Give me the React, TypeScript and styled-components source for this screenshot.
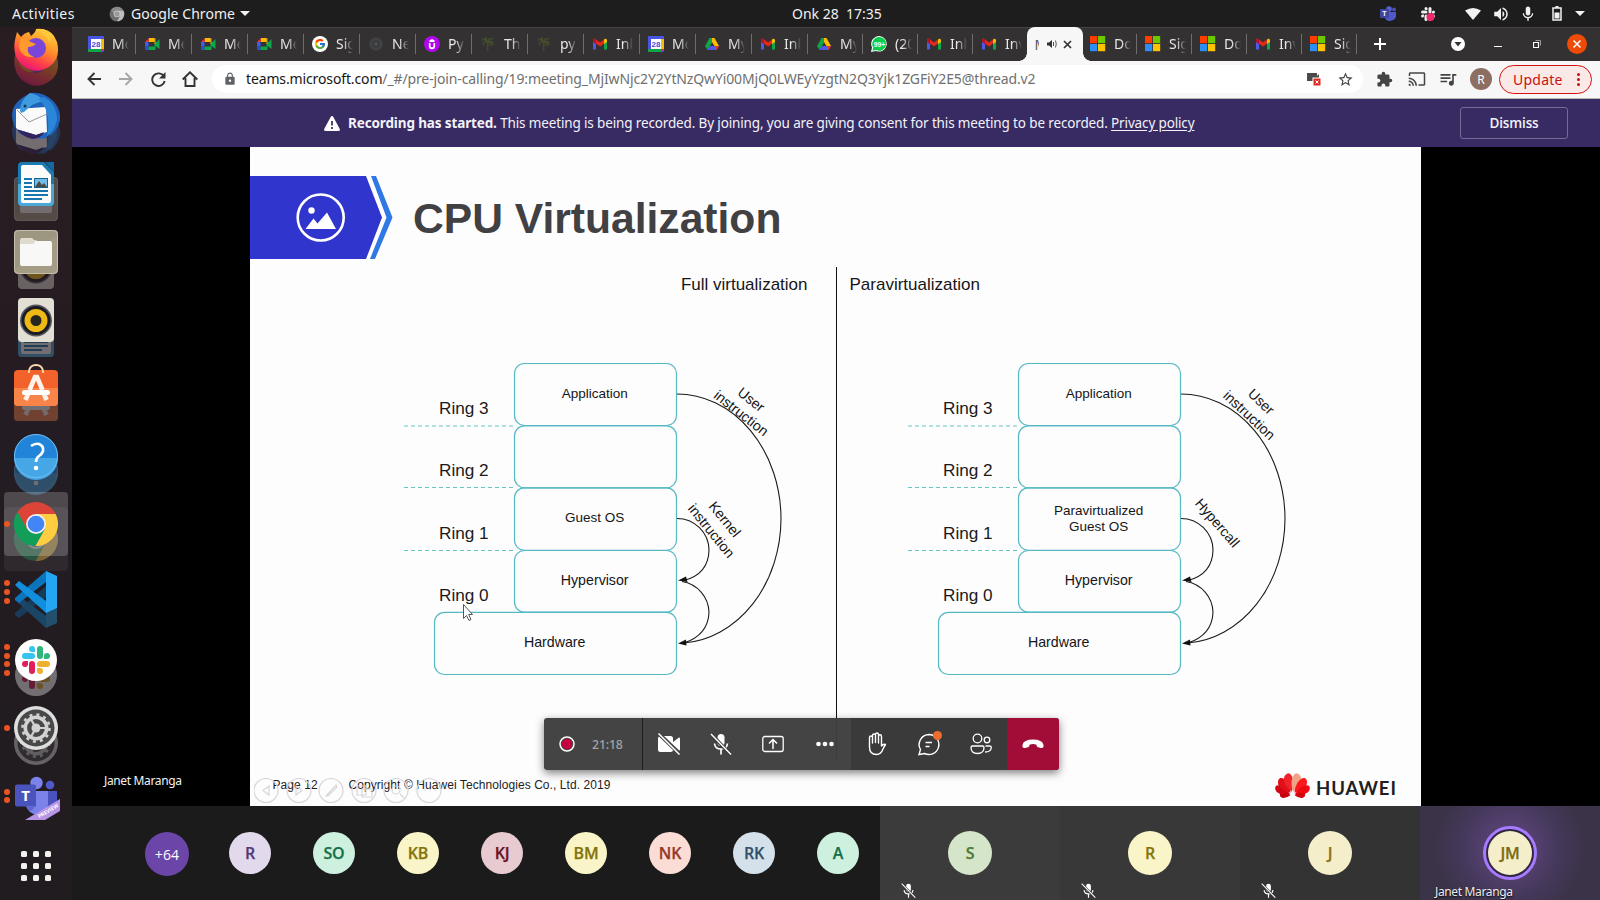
import React from 'react';
import styled, { createGlobalStyle, css } from 'styled-components';
import { FcGoogle } from 'react-icons/fc';
import { MdLock, MdStarBorder, MdExtension, MdCast, MdQueueMusic, MdVolumeUp, MdMic } from 'react-icons/md';

const UI = '"Noto Sans", "Open Sans", sans-serif';
const ARIAL = '"Liberation Sans", Arial, sans-serif';

const Global = createGlobalStyle`
  * { box-sizing: border-box; }
  html, body { margin: 0; padding: 0; background: #000; }
  body { width: 1600px; height: 900px; overflow: hidden; font-family: ${UI}; }
  svg { display: block; flex: none; }
`;

const Screen = styled.div`
  width: 1600px;
  height: 900px;
  display: flex;
  flex-direction: column;
  overflow: hidden;
`;

/* ---------- system bar ---------- */

const SystemBar = styled.header`
  height: 27px;
  flex: none;
  display: grid;
  grid-template-columns: 792px 1fr 222px;
  align-items: center;
  background: #1d1d1d;
  color: #f0f0f0;
  font-size: 14px;
  line-height: 26px;
`;

const SystemLeft = styled.div`
  display: flex;
  align-items: center;
  padding-left: 12px;
  white-space: pre;
`;

const Activities = styled.span`
  width: 97px;
  letter-spacing: 0.45px;
`;

const AppName = styled.span`
  margin: 0 6px 0 6px;
  width: 103px;
  letter-spacing: 0.05px;
`;

const Clock = styled.div`
  white-space: pre;
`;

const Tray = styled.div`
  display: flex;
  align-items: center;
`;

const TrayItem = styled.span<{ $w: number }>`
  width: ${(p) => p.$w}px;
  display: flex;
  justify-content: center;
`;

const Desktop = styled.div`
  flex: 1;
  min-height: 0;
  display: flex;
`;

/* ---------- dock ---------- */

const DockBar = styled.nav`
  width: 72px;
  flex: none;
  display: flex;
  flex-direction: column;
  overflow: hidden;
  background: linear-gradient(#2a1d22, #231c22 50%, #211c20);
`;

const DockCell = styled.div<{ $h: number }>`
  position: relative;
  height: ${(p) => p.$h}px;
  flex: none;
  display: flex;
  justify-content: center;
  align-items: flex-end;
  padding-bottom: 10px;
`;

const Ghost = styled.div`
  position: absolute;
  left: 12px;
  bottom: -5px;
  opacity: 0.36;
`;

const Front = styled.div`
  position: relative;
`;

const Focus = styled.div<{ $faint?: boolean }>`
  position: absolute;
  left: 4px;
  top: ${(p) => (p.$faint ? 17 : 2)}px;
  width: 64px;
  height: 64px;
  border-radius: 4px;
  background: rgba(255, 255, 255, ${(p) => (p.$faint ? 0.06 : 0.2)});
`;

const Running = styled.div`
  position: absolute;
  left: 4px;
  top: 0;
  height: 68px;
  display: flex;
  flex-direction: column;
  justify-content: center;
  gap: 2.7px;
`;

const Pip = styled.i`
  width: 6px;
  height: 6px;
  border-radius: 50%;
  background: #e95420;
`;

const AppsGrid = styled.div`
  width: 30px;
  margin: 21px auto 0;
  display: grid;
  grid-template-columns: repeat(3, 6px);
  gap: 6px;
`;

const AppsDot = styled.i`
  width: 6px;
  height: 6px;
  border-radius: 1.5px;
  background: #f2f2ee;
`;

const Firefox = () => (
  <svg width="48" height="48" viewBox="0 0 48 48">
    <defs>
      <linearGradient id="ff" x1=".8" y1="0" x2=".3" y2="1">
        <stop offset="0" stopColor="#ffd83a" />
        <stop offset=".45" stopColor="#ff8a2a" />
        <stop offset=".75" stopColor="#ff3c4e" />
        <stop offset="1" stopColor="#e5107e" />
      </linearGradient>
    </defs>
    <path d="M5 8 9 13Q12 9 17 8L19 12Q24 8 24 5Q37 4 42 12L45 18Q49 34 38 42Q24 52 10 41Q0 32 3 16Z" fill="url(#ff)" />
    <circle cx="24" cy="24" r="10" fill="#7a45d8" />
    <path d="M9 14Q15 15 19 18L24 20Q21 23 16 23Q14 30 22 33Q9 34 7 22Z" fill="#ff9a2c" />
    <path d="M24 5Q35 9 38 20Q39 12 36 7Q31 4 24 5Z" fill="#ffc93c" />
  </svg>
);

const Thunderbird = () => (
  <svg width="48" height="48" viewBox="0 0 48 48">
    <path d="M18 1Q30-1 40 8Q49 16 48 28Q46 38 38 44L38 40L34 46Q20 48 8 42Q0 34 0 22Q1 12 10 6Z" fill="#1f63bd" />
    <path d="M4 17 34 15 35 40 24 43 4 37Z" fill="#fafafa" />
    <path d="M5 18 17 30 35 22" fill="none" stroke="#999" />
    <path d="M18 1Q25 2 33 9Q26 10 20 13L12 20Q8 22 8 19Q8 8 18 1Z" fill="#3f9ade" />
    <path d="M32 5Q45 12 45 28Q42 40 35 44Q38 30 34 18Q31 10 26 7Z" fill="#2c86d8" />
    <path d="M4 37 24 43 32 40Q30 46 20 47 8 44 3 34Z" fill="#33245c" />
    <circle cx="13" cy="14" r="1.5" fill="#16365c" />
  </svg>
);

const Writer = () => (
  <svg width="48" height="48" viewBox="0 0 48 48">
    <path d="M10 2H32L42 12V42Q42 46 38 46H10Q6 46 6 42V6Q6 2 10 2Z" fill="#1b7bb0" />
    <path d="M6 24H42V42Q42 46 38 46H10Q6 46 6 42Z" fill="#4aa9d8" />
    <path d="M11 5H30L39 15V41Q39 43 37 43H11Q9 43 9 41V7Q9 5 11 5Z" fill="#fbfbfb" />
    <path d="M33 2H42V12Z" fill="#126ba0" />
    <path d="M12 19H20M12 23H20M12 27H20M12 31H36M12 35H36M12 39H30" stroke="#1677ad" strokeWidth="2" />
    <rect x="22.500" y="18.500" width="13" height="9" fill="#74bce8" stroke="#15628f" />
    <path d="M23 27 27 21 30 25 32 23 35 27Z" fill="#4a4a4a" />
  </svg>
);

const Files = () => (
  <svg width="48" height="48" viewBox="0 0 48 48">
    <rect x="2" y="2" width="44" height="44" rx="4" fill="#a59c86" />
    <path d="M2 42V6Q2 2 6 2H42Q46 2 46 6L2 42Z" fill="#968f7b" opacity=".5" />
    <rect x="2.500" y="2.500" width="43" height="43" rx="4" fill="none" stroke="#c6bfae" />
    <path d="M8 18V12Q8 10 10 10H20L24 14H38V20Z" fill="#e0ddd0" />
    <rect x="8" y="13" width="32" height="25" rx="2" fill="#f8f8f7" />
    <path d="M8 16H21L25 12H12Q8 12 8 16Z" fill="#dedbce" />
  </svg>
);

const Rhythm = () => (
  <svg width="48" height="48" viewBox="0 0 48 48">
    <rect x="6" y="2" width="36" height="44" rx="4" fill="#e2dfd4" />
    <circle cx="24" cy="24.500" r="16" fill="#5a5a60" />
    <circle cx="24" cy="24.500" r="14.500" fill="#1c1c24" />
    <circle cx="24" cy="24.500" r="11.500" fill="#edb914" />
    <circle cx="24" cy="24.500" r="5.500" fill="#26251f" />
  </svg>
);

const Software = () => (
  <svg width="48" height="48" viewBox="0 0 48 48">
    <rect x="2" y="6" width="44" height="36" rx="4" fill="#f4622c" />
    <path d="M2 24H46V38Q46 42 42 42H6Q2 42 2 38Z" fill="#f98449" />
    <path d="M17 9V7Q18 1 24 1T31 7V9" fill="none" stroke="#f8d9b0" strokeWidth="1.800" />
    <path d="M17.500 26 23 13H25L30.500 26M16 30 13.500 36M32 30 34.500 36" fill="none" stroke="#fff3ec" strokeWidth="4.600" />
    <rect x="10" y="26" width="28" height="5" rx="2.500" fill="#fff" />
  </svg>
);

const Help = () => (
  <svg width="48" height="48" viewBox="0 0 48 48">
    <circle cx="24" cy="24" r="22" fill="#2184d8" />
    <path d="M2 26H46A22 22 0 0 1 2 26Z" fill="#46a7e6" />
    <circle cx="24" cy="24" r="21.500" fill="none" stroke="#6fbdf0" />
    <path d="M19 14Q23 11 27 12Q32 14 31 19Q30 22 27 24Q24 26 24 30" fill="none" stroke="#fff" strokeWidth="2.700" />
    <circle cx="24" cy="36" r="2.300" fill="#fff" />
  </svg>
);

const ChromeLogo = ({ size = 48, grey }: { size?: number; grey?: boolean }) => {
  const [r, y, g, b] = grey ? ['#8a8a8a', '#bcbcbc', '#6e6e6e', '#9a9a9a'] : ['#dc4437', '#ffcd42', '#129d58', '#4285f4'];
  return (
    <svg width={size} height={size} viewBox="0 0 48 48">
      <path d="M24 24 4.950 13A22 22 0 0 1 43.600 14Z" fill={r} />
      <path d="M24 14 5.500 12 14.500 29Z" fill={r} />
      <path d="M5.500 12 15 29 24 34 33 29 23.500 46A22 22 0 0 1 5.500 12Z" fill={g} />
      <path d="M24 14H43.600A22 22 0 0 1 23.500 46L33 29Z" fill={y} />
      <circle cx="24" cy="24" r="10" fill={grey ? '#ddd' : '#f2f2f2'} />
      <circle cx="24" cy="24" r="8.300" fill={b} />
    </svg>
  );
};

const VsCode = () => (
  <svg width="48" height="48" viewBox="0 0 48 48">
    <path d="M34 3 3 30V32L7 35 34 14Z" fill="#0a74bd" />
    <path d="M3 17 7 13 34 33V45Z" fill="#118fdd" />
    <path d="M34 3 45 8V40L34 45Z" fill="#25a6f2" />
  </svg>
);

const SlackMark = ({ mono }: { mono?: boolean }) => {
  const c = mono ? ['#eee', '#eee', '#eee', '#eee'] : ['#36c5f0', '#2eb67d', '#ecb22e', '#e01e5a'];
  return (
    <>
      <path d="M23 16H20A3 3 0 1 1 23 13Z" fill={c[0]} />
      <rect x="10" y="17" width="13" height="6" rx="3" fill={c[0]} />
      <rect x="25" y="10" width="6" height="13" rx="3" fill={c[1]} />
      <path d="M32 23V20A3 3 0 1 1 35 23Z" fill={c[1]} />
      <rect x="25" y="25" width="13" height="6" rx="3" fill={c[2]} />
      <path d="M25 32H28A3 3 0 1 1 25 35Z" fill={c[2]} />
      <rect x="17" y="25" width="6" height="13" rx="3" fill={c[3]} />
      <path d="M16 25V28A3 3 0 1 1 13 25Z" fill={c[3]} />
    </>
  );
};

const Slack = () => (
  <svg width="48" height="48" viewBox="0 0 48 48">
    <circle cx="24" cy="24" r="21" fill="#fff" />
    <SlackMark />
  </svg>
);

const Settings = () => (
  <svg width="48" height="48" viewBox="0 0 48 48">
    <circle cx="24" cy="24" r="22" fill="#dedede" />
    <circle cx="24" cy="24" r="18.500" fill="#484848" />
    <circle cx="24" cy="24" r="13.500" fill="none" stroke="#d2d2d2" strokeWidth="2.600" strokeDasharray="3 4.070" />
    <circle cx="24" cy="24" r="10.700" fill="none" stroke="#d2d2d2" strokeWidth="3.600" />
    <circle cx="24" cy="24" r="4.500" fill="#d2d2d2" />
    <path d="M24 24H35M24 24 18.500 14.500M24 24 18.500 33.500" stroke="#d2d2d2" strokeWidth="2.200" />
  </svg>
);

const TLetter = styled.text`
  font-family: "Open Sans", sans-serif;
  font-weight: 700;
  fill: #fff;
  text-anchor: middle;
`;

const Teams = () => (
  <svg width="48" height="48" viewBox="0 0 48 48">
    <circle cx="38" cy="13" r="4.300" fill="#5059c9" />
    <path d="M30 19H45V34Q43 40 36 39L30 36Z" fill="#4a53bd" />
    <circle cx="24.500" cy="11" r="6.200" fill="#7b83eb" />
    <path d="M14 19H36V32Q35 43 25 43Q16 41 14 34Z" fill="#7b83eb" />
    <path d="M24 20V35H15L17 39Q25 39 24 20Z" fill="#4b53bc" opacity=".6" />
    <rect x="3" y="12.500" width="21" height="22" rx="2" fill="#4b53bc" />
    <TLetter x="13.500" y="29" fontSize="15">T</TLetter>
    <path d="M48 27V39L33 48H13Z" fill="#b794e6" />
    <TLetter x="0" y="0" fontSize="5.200" transform="translate(37 40.500) rotate(-31)">PREVIEW</TLetter>
  </svg>
);

type DockApp = { icon: React.FC; ghost?: React.FC; dots?: number; h?: number; focus?: boolean };
const dockApps: DockApp[] = [
  { icon: Firefox, ghost: Firefox, h: 55 },
  { icon: Thunderbird, ghost: Thunderbird },
  { icon: Writer, ghost: Files },
  { icon: Files, ghost: Rhythm },
  { icon: Rhythm, ghost: Writer },
  { icon: Software, ghost: Software },
  { icon: Help, ghost: Help },
  { icon: ChromeLogo, ghost: ChromeLogo, dots: 1, focus: true },
  { icon: VsCode, ghost: VsCode, dots: 3 },
  { icon: Slack, ghost: Slack, dots: 4 },
  { icon: Settings, ghost: Settings, dots: 1 },
  { icon: Teams, dots: 2 },
];

const Dock = () => (
  <DockBar>
    {dockApps.map(({ icon: Icon, ghost: G, dots = 0, h = 68, focus }, i) => (
      <DockCell key={i} $h={h}>
        {G && <Ghost><G /></Ghost>}
        {focus && <><Focus $faint /><Focus /></>}
        {dots > 0 && <Running>{Array.from({ length: dots }, (_, d) => <Pip key={d} />)}</Running>}
        <Front><Icon /></Front>
      </DockCell>
    ))}
    <AppsGrid>{Array.from({ length: 9 }, (_, d) => <AppsDot key={d} />)}</AppsGrid>
  </DockBar>
);

/* ---------- browser ---------- */

const Browser = styled.div`
  flex: 1;
  min-width: 0;
  display: flex;
  flex-direction: column;
`;

const TabStrip = styled.div`
  height: 34px;
  flex: none;
  display: flex;
  align-items: center;
  padding: 0 0 1px 8px;
  background: #333132;
  border-top: 1px solid #454344;
`;

const Tab = styled.div<{ $w: number; $last?: boolean }>`
  width: ${(p) => p.$w}px;
  height: 20px;
  flex: none;
  display: flex;
  align-items: center;
  padding-left: 8px;
  border-right: 1px solid ${(p) => (p.$last ? 'transparent' : '#6e6c6d')};
`;

const TabLabel = styled.span`
  margin-left: 8px;
  width: 17px;
  overflow: hidden;
  white-space: nowrap;
  font-size: 14px;
  line-height: 20px;
  color: #e8e8e8;
  -webkit-mask-image: linear-gradient(90deg, #000 45%, transparent 100%);
  mask-image: linear-gradient(90deg, #000 45%, transparent 100%);
`;

const ActiveTab = styled.div`
  position: relative;
  width: 56px;
  margin: -1px -1px 0 0;
  height: 34px;
  align-self: flex-start;
  flex: none;
  display: flex;
  align-items: center;
  padding-left: 8px;
  background: #f7f7f7;
  border-radius: 8px 8px 0 0;
  &::before, &::after {
    content: '';
    position: absolute;
    bottom: 0;
    width: 8px;
    height: 8px;
  }
  &::before { left: -8px; background: radial-gradient(circle at 0 0, transparent 7.5px, #f7f7f7 8px); }
  &::after { right: -8px; background: radial-gradient(circle at 100% 0, transparent 7.5px, #f7f7f7 8px); }
`;

const ActiveLetter = styled.span`
  width: 4px;
  overflow: hidden;
  font-size: 14px;
  color: #555;
  text-indent: -0.5px;
  margin-right: 8px;
`;

const WindowButtons = styled.div`
  margin-left: auto;
  margin-right: 3px;
  display: flex;
  align-items: center;
`;

const Slot = styled.span<{ $w: number }>`
  width: ${(p) => p.$w}px;
  flex: none;
  display: flex;
  align-items: center;
  justify-content: center;
`;

const Toolbar = styled.div`
  height: 38px;
  flex: none;
  display: flex;
  align-items: center;
  padding: 0 8px 1px 6px;
  background: #f7f7f7;
  border-bottom: 1px solid #b5b9b5;
`;

const Omnibox = styled.div`
  margin-left: 6px;
  width: 1151px;
  height: 28px;
  flex: none;
  display: flex;
  align-items: center;
  padding: 0 6px 0 11px;
  border-radius: 14px;
  background: #fff;
  color: #3c4043;
`;

const Url = styled.span`
  margin-left: 9px;
  padding-bottom: 1px;
  font-size: 14px;
  line-height: 25px;
  letter-spacing: -0.13px;
  color: #6f6f6f;
  white-space: nowrap;
  b { font-weight: 400; color: #151515; }
`;

const OmniRight = styled.div`
  margin-left: auto;
  display: flex;
  align-items: center;
`;

const Profile = styled.span`
  width: 22px;
  height: 22px;
  margin: 0 7px 0 2px;
  flex: none;
  display: flex;
  align-items: center;
  justify-content: center;
  border-radius: 50%;
  background: #8d6e63;
  color: #fff;
  font-size: 12px;
`;

const Update = styled.span`
  width: 93px;
  height: 29px;
  flex: none;
  display: flex;
  align-items: center;
  padding-left: 13px;
  border: 1px solid #d3120f;
  border-radius: 15px;
  background: #fbe9e8;
  color: #c5120f;
  font-size: 14px;
  letter-spacing: 0.25px;
`;

const Kebab = styled.span`
  margin-left: auto;
  margin-right: 11px;
  display: flex;
  flex-direction: column;
  gap: 2px;
  i { width: 3px; height: 3px; border-radius: 50%; background: #c5120f; }
`;

const Gmail = () => (
  <svg width="16" height="16" viewBox="0 0 16 16">
    <path d="M1 4.500V13.500H4V7Z" fill="#4f5be8" />
    <path d="M15 4.500V13.500H12V7Z" fill="#10a84b" />
    <path d="M1 4Q2 1.500 4 3.500L8 6.500 12 3.500V7.500L8 10.500 4 7.500Z" fill="#e8271c" />
    <path d="M1 4V6L4 8V3.500Q2 2 1 4Z" fill="#b3122a" />
    <path d="M15 4V6L12 8V3.500Q14 2 15 4Z" fill="#fbbc04" />
  </svg>
);

const TinyBold = styled.text`
  font-family: "Liberation Sans", sans-serif;
  font-weight: 700;
  text-anchor: middle;
`;

const Calendar = () => (
  <svg width="16" height="16" viewBox="0 0 16 16">
    <rect width="16" height="16" rx="1" fill="#4a55e6" />
    <path d="M13 3H16V13H13Z" fill="#fbbc04" />
    <path d="M0 13H13V16H1Q0 16 0 15Z" fill="#12a547" />
    <path d="M13 13H16L13 16Z" fill="#e53422" />
    <rect x="3" y="3" width="10" height="10" fill="#fff" />
    <TinyBold x="8" y="11" fontSize="8" fill="#3d50dd">28</TinyBold>
  </svg>
);

const Meet = () => (
  <svg width="16" height="16" viewBox="0 0 16 16">
    <path d="M1 6 5 2V6Z" fill="#e63528" />
    <path d="M5 2H10.500V6H5Z" fill="#fbbc04" />
    <path d="M1 6H4.500V10.500H1Z" fill="#3f5bf0" />
    <path d="M1 10.500H4.500V14H2Q1 14 1 13Z" fill="#2a50d8" />
    <path d="M4.500 10.500H10.500V8L15.500 3V13L11.500 10V14H4.500Z" fill="#0ea64a" />
    <path d="M10.500 2Q11.500 2 11.500 3V8H10.500Z" fill="#fbbc04" />
  </svg>
);

const Google = () => (
  <svg width="16" height="16" viewBox="0 0 16 16">
    <circle cx="8" cy="8" r="8" fill="#fff" />
    <g transform="translate(2 2)"><FcGoogle size={12} /></g>
  </svg>
);

const DimChrome = () => (
  <svg width="16" height="16" viewBox="0 0 16 16" fill="none" stroke="#45474b">
    <circle cx="8" cy="8" r="5" strokeWidth="3.500" opacity=".8" />
    <circle cx="8" cy="8" r="2.300" fill="#494d54" stroke="none" />
  </svg>
);

const Udemy = () => (
  <svg width="16" height="16" viewBox="0 0 16 16">
    <circle cx="8" cy="8" r="8" fill="#b108ee" />
    <path d="M5.700 7V10.500Q6 12.300 8 12.300T10.300 10.500V7M5.500 5.500 8 4 10.500 5.500" fill="none" stroke="#fff" strokeWidth="1.700" />
  </svg>
);

const Palm = () => (
  <svg width="16" height="16" viewBox="0 0 16 16" fill="none" stroke="#434d2b" strokeWidth="1.600">
    <path d="M8 6Q5 2 2 4M8 6Q4 5 3 9M8 6Q9 1 13 3M8 6Q13 4 13 9M8 6V9M8 6Q4 1 7 2M8 6Q11 5 11 10" />
    <path d="M8 6 7.500 15" stroke="#4e4330" />
  </svg>
);

const Drive = () => (
  <svg width="16" height="16" viewBox="0 0 16 16">
    <path d="M5.500 2H8L8 6.500 3.500 14 1 10Z" fill="#12a34a" />
    <path d="M8 2H10.500L15 10H10.500L8 6Z" fill="#fbbc04" />
    <path d="M3.500 14 5.700 10H15L12.500 14Z" fill="#4b5ce8" />
    <path d="M10.500 10H15L12.500 14Z" fill="#e5352a" />
  </svg>
);

const WhatsApp = () => (
  <svg width="16" height="16" viewBox="0 0 16 16">
    <path d="M8.500 0A7.800 7.800 0 1 1 5 15L0 16 1 11.500A8 8 0 0 1 8.500 0Z" fill="#fff" />
    <path d="M8.500 1A6.900 6.900 0 1 1 5 14L1.500 14.700 2.200 11.500A7 7 0 0 1 8.500 1Z" fill="#06cf4c" />
    <TinyBold x="8.500" y="10.500" fontSize="6.800" fill="#fff">99+</TinyBold>
  </svg>
);

const Microsoft = () => (
  <svg width="16" height="16" viewBox="0 0 16 16">
    <path d="M0 0H7.200V7.200H0Z" fill="#ff3d00" />
    <path d="M8 0H15.200V7.200H8Z" fill="#6cc900" />
    <path d="M0 8H7.200V15.200H0Z" fill="#2c8ff5" />
    <path d="M8 8H15.200V15.200H8Z" fill="#ffc400" />
  </svg>
);

const tabsBefore: [React.FC, string][] = [
  [Calendar, 'Mo'], [Meet, 'Me'], [Meet, 'Me'], [Meet, 'Me'], [Google, 'Sig'], [DimChrome, 'Ne'], [Udemy, 'Py'],
  [Palm, 'Th'], [Palm, 'py'], [Gmail, 'Inb'], [Calendar, 'Mo'], [Drive, 'My'], [Gmail, 'Inb'],
  [Drive, 'My'], [WhatsApp, '(20'], [Gmail, 'Inb'], [Gmail, 'Inv'],
];
const tabsAfter: [React.FC, string][] = [
  [Microsoft, 'Do'], [Microsoft, 'Sig'], [Microsoft, 'Do'], [Gmail, 'Inv'], [Microsoft, 'Sig'],
];

const Chrome = () => (
  <>
    <TabStrip>
      {tabsBefore.map(([Icon, label], i) => (
        <Tab key={i} $w={i === 16 ? 54 : i < 13 ? 56 : 55} $last={i === 16}><Icon /><TabLabel>{label}</TabLabel></Tab>
      ))}
      <ActiveTab>
        <ActiveLetter>M</ActiveLetter>
        <svg width="10" height="10" viewBox="0 0 10 10">
          <path d="M0 3.500H2L5 1V9L2 6.500H0Z" fill="#333" />
          <path d="M6.500 3V7M8.500 1.500Q10 5 8.500 8.500" stroke="#555" fill="none" />
        </svg>
        <Slot $w={21}>
          <svg width="9" height="9" viewBox="0 0 9 9"><path d="M1 1 8 8M8 1 1 8" stroke="#333" strokeWidth="1.700" /></svg>
        </Slot>
      </ActiveTab>
      {tabsAfter.map(([Icon, label], i) => (
        <Tab key={i} $w={55}><Icon /><TabLabel>{label}</TabLabel></Tab>
      ))}
      <Slot $w={46}>
        <svg width="12" height="12" viewBox="0 0 12 12"><path d="M6 0V12M0 6H12" stroke="#fff" strokeWidth="2" /></svg>
      </Slot>
      <WindowButtons>
        <Slot $w={40}>
          <svg width="14" height="14" viewBox="0 0 14 14"><circle cx="7" cy="7" r="7" fill="#fff" /><path d="M3.500 5H10.500L7 9.500Z" fill="#333" /></svg>
        </Slot>
        <Slot $w={39}>
          <svg width="8" height="8" viewBox="0 0 8 8"><path d="M0 6.500H8" stroke="#fff" /></svg>
        </Slot>
        <Slot $w={40}>
          <svg width="8" height="8" viewBox="0 0 8 8" fill="none"><path d="M2.500.5H7.500V5.500" stroke="#999" /><path d="M.5 2.500H5.500V7.500H.5Z" stroke="#fff" strokeWidth="1.200" /></svg>
        </Slot>
        <Slot $w={40}>
          <svg width="20" height="20" viewBox="0 0 20 20"><circle cx="10" cy="10" r="10" fill="#ee4b08" /><path d="M6.500 6.500 13.500 13.500M13.500 6.500 6.500 13.500" stroke="#fff" strokeWidth="1.500" /></svg>
        </Slot>
      </WindowButtons>
    </TabStrip>
    <Toolbar>
      <Slot $w={32}><svg width="14" height="14" viewBox="0 0 14 14"><path d="M14 7H1.500M7.500 1 1.500 7 7.500 13" fill="none" stroke="#333" strokeWidth="1.900" /></svg></Slot>
      <Slot $w={32}><svg width="14" height="14" viewBox="0 0 14 14"><path d="M0 7H12.500M6.500 1 12.500 7 6.500 13" fill="none" stroke="#a6a6a6" strokeWidth="1.900" /></svg></Slot>
      <Slot $w={32}><svg width="15" height="15" viewBox="0 0 15 15"><path d="M13 4.500A6.300 6.300 0 1 0 13.700 9" fill="none" stroke="#333" strokeWidth="1.900" /><path d="M14.500 0V6.500H8Z" fill="#333" /></svg></Slot>
      <Slot $w={32}><svg width="16" height="16" viewBox="0 0 16 16"><path d="M3.500 7V15H12.500V7M.7 8.500 8 1.300 15.300 8.500" fill="none" stroke="#333" strokeWidth="1.900" /></svg></Slot>
      <Omnibox>
        <MdLock size={14} color="#5f6368" />
        <Url><b>teams.microsoft.com</b>/_#/pre-join-calling/19:meeting_MjIwNjc2Y2YtNzQwYi00MjQ0LWEyYzgtN2Q3Yjk1ZGFiY2E5@thread.v2</Url>
        <OmniRight>
          <Slot $w={38}>
            <svg width="16" height="14" viewBox="0 0 16 14"><path d="M1 1H11V4L13 2V9H1Z" fill="#4a4a4a" /><rect x="7" y="6" width="8" height="8" fill="#e02a20" stroke="#fff" /><path d="M9.500 8.500 12.500 11.500M12.500 8.500 9.500 11.500" stroke="#fff" /></svg>
          </Slot>
          <Slot $w={24}><MdStarBorder size={17} color="#444" /></Slot>
        </OmniRight>
      </Omnibox>
      <Slot $w={42}><MdExtension size={17} color="#444" /></Slot>
      <Slot $w={23}><MdCast size={18} color="#444" /></Slot>
      <Slot $w={40}><MdQueueMusic size={20} color="#444" /></Slot>
      <Profile>R</Profile>
      <Update>Update<Kebab><i /><i /><i /></Kebab></Update>
    </Toolbar>
  </>
);

/* ---------- meeting ---------- */

const Banner = styled.div`
  height: 48px;
  flex: none;
  display: flex;
  align-items: center;
  padding: 0 32px 0 252px;
  background: #382a63;
  color: #f3f2f8;
  font-size: 13.5px;
`;

const BannerText = styled.span`
  margin-left: 8px;
  letter-spacing: -0.14px;
  white-space: pre;
  line-height: 20px;
  b { letter-spacing: -0.13px; }
  u { text-underline-offset: 2px; }
`;

const Dismiss = styled.span`
  margin-left: auto;
  width: 108px;
  height: 32px;
  display: flex;
  align-items: center;
  justify-content: center;
  border: 1px solid #766b96;
  border-radius: 3px;
  font-family: "Open Sans", sans-serif;
  font-weight: 600;
  font-size: 13.5px;
  letter-spacing: -0.15px;
`;

const Stage = styled.main`
  position: relative;
  height: 659px;
  flex: none;
  display: flex;
  background: #000;
`;

const Presenter = styled.div`
  width: 178px;
  flex: none;
  display: flex;
  align-items: flex-end;
  padding: 0 0 16px 32px;
  color: #f2f2f2;
  font-size: 12px;
  letter-spacing: -0.35px;
  line-height: 18px;
  white-space: nowrap;
`;

const Slide = styled.section`
  width: 1171px;
  flex: none;
  display: flex;
  flex-direction: column;
  background: #fefdfe;
  font-family: ${ARIAL};
`;

const SlideHead = styled.div`
  margin-top: 29px;
  height: 83px;
  flex: none;
  display: flex;
  align-items: center;
`;

const SlideTitle = styled.h1`
  margin: 0 0 0 19px;
  font-size: 42.6px;
  line-height: 50px;
  font-weight: 700;
  color: #414042;
  white-space: nowrap;
`;

const Columns = styled.div`
  margin-top: 8px;
  height: 494px;
  flex: none;
  display: flex;
`;

const Column = styled.div<{ $right?: boolean }>`
  width: ${(p) => (p.$right ? 585 : 586)}px;
  flex: none;
  ${(p) => p.$right && css`border-left: 1px solid #111;`}
`;

const ColumnTitle = styled.div<{ $right?: boolean }>`
  height: 32px;
  padding: ${(p) => (p.$right ? '0 0 0 12.5px' : '0 28.5px 0 0')};
  text-align: ${(p) => (p.$right ? 'left' : 'right')};
  font-size: 17px;
  line-height: 35px;
  color: #161616;
`;

const BoxText = styled.text`
  font-family: ${ARIAL};
  font-size: 13.5px;
  text-anchor: middle;
  fill: #151515;
`;

const WideBoxText = styled(BoxText)`
  font-size: 14.2px;
`;

const RingText = styled.text`
  font-family: ${ARIAL};
  font-size: 17.2px;
  fill: #1a1a1a;
`;

type Note = { t: string; x: number; y: number; a: number };

const Rings = ({ left, guest, notes, pointer }: { left: number; guest: string[]; notes: Note[]; pointer?: boolean }) => (
  <svg width="584" height="462" viewBox={`${left} 299 584 462`}>
    <g fill="none" stroke="#55b9c3" strokeWidth="1.200">
      <path d="M404 426H514M404 487.500H514M404 550.500H514" strokeDasharray="4 3" stroke="#67c5c4" />
      <rect x="514.500" y="363.500" width="162" height="62" rx="10" />
      <rect x="514.500" y="425.800" width="162" height="62" rx="10" />
      <rect x="514.500" y="487.800" width="162" height="62.500" rx="10" />
      <rect x="514.500" y="550.500" width="162" height="61.700" rx="10" />
      <rect x="434.500" y="612.300" width="242" height="62.200" rx="10" />
    </g>
    {[414, 476, 538.5, 601].map((y, i) => <RingText key={y} x="439" y={y}>{`Ring ${3 - i}`}</RingText>)}
    <BoxText x="594.700" y="397.500">Application</BoxText>
    {guest.map((g, i) => <BoxText key={g} x="594.700" y={guest.length > 1 ? 514.5 + i * 16 : 522}>{g}</BoxText>)}
    <WideBoxText x="594.700" y="585">Hypervisor</WideBoxText>
    <WideBoxText x="554.700" y="646.500">Hardware</WideBoxText>
    <g fill="none" stroke="#1c1c1c" strokeWidth="1.100">
      <path d="M677 394A104 125 0 0 1 781 519A104 125 0 0 1 684 643" />
      <path d="M677 518.500A32 32 0 0 1 709 550Q708.500 574 684 580.500" />
      <path d="M682 581.500A32 32 0 0 1 709 612.500Q708 635 684 643" />
    </g>
    <path d="M678 580.500 686 576.500 687.500 582ZM678 643.500 686 639.500 686.500 645.500Z" fill="#111" />
    {notes.map((n) => (
      <WideBoxText key={n.t} x="0" y="0" dy="4.500" transform={`translate(${n.x} ${n.y}) rotate(${n.a})`}>{n.t}</WideBoxText>
    ))}
    {pointer && <path d="M463.500 604.500V618.500L466.500 615.500 469 620.500 471 619.500 468.700 614.500H472.500Z" fill="#fff" stroke="#444" strokeWidth=".9" />}
  </svg>
);

const SlideFoot = styled.footer`
  position: relative;
  flex: 1;
  display: flex;
  align-items: flex-start;
  padding: 15px 24px 0 22.5px;
  font-size: 12px;
  line-height: 18px;
  letter-spacing: 0.07px;
  color: #222;
  white-space: nowrap;
`;

const PageNo = styled.span`width: 76px;`;

const Controls = styled.div`
  position: absolute;
  left: 4px;
  top: 17px;
`;

const Brand = styled.div`
  margin: -4px 0 0 auto;
  height: 28px;
  display: flex;
  align-items: center;
  gap: 5px;
  color: #231f20;
`;

const BrandName = styled.span`
  width: 81px;
  font-family: "Lato", sans-serif;
  font-weight: 700;
  font-size: 18.5px;
  letter-spacing: 0.95px;
  line-height: 28px;
  padding-top: 3px;
`;

const petals = [
  { a: -92, c: '#c2000c', s: 0.62 }, { a: -66, c: '#d20613', s: 0.92 }, { a: -40, c: '#e20f18', s: 1.02 }, { a: -14, c: '#f0232a', s: 1.08 },
  { a: 14, c: '#f2a184', s: 1.08 }, { a: 40, c: '#fa1a1e', s: 1.02 }, { a: 66, c: '#ef0a12', s: 0.92 }, { a: 92, c: '#d0060f', s: 0.62 },
];

const HuaweiFlower = () => (
  <svg width="37" height="28" viewBox="0 0 37 28">
    {petals.map((p) => (
      <path key={p.a} d="M0-3Q-6-11-4-17Q-2-21 1.500-20.500Q4.500-19 4-12Q3-7 0-3Z" fill={p.c} transform={`translate(18.500 23) rotate(${p.a}) scale(${p.a > 0 ? -p.s : p.s} ${p.s})`} />
    ))}
  </svg>
);

const CallBar = styled.div`
  position: absolute;
  left: 472px;
  top: 571px;
  width: 515px;
  height: 52px;
  display: flex;
  border-radius: 3px;
  overflow: hidden;
  background: rgba(62, 62, 62, 0.97);
`;

const CallShadow = styled.div`
  position: absolute;
  left: 472px;
  top: 571px;
  width: 515px;
  height: 52px;
  border-radius: 3px;
  box-shadow: 0 3px 9px rgba(0, 0, 0, 0.5);
`;

const RecInfo = styled.div`
  width: 99px;
  flex: none;
  display: flex;
  align-items: center;
  padding-left: 15px;
  gap: 17px;
  border-right: 1px solid #1c1c1c;
  color: #a3a3a3;
  font-size: 12.3px;
  letter-spacing: -0.15px;
  font-weight: 500;
`;

const CallButton = styled.div<{ $tone?: 'dark' | 'end' }>`
  width: 52px;
  flex: none;
  display: flex;
  align-items: center;
  justify-content: center;
  background: ${(p) => (p.$tone === 'end' ? '#a10d37' : p.$tone === 'dark' ? '#3a3a3a' : 'transparent')};
`;

const MicOff = ({ size = 22 }: { size?: number }) => (
  <svg width={size} height={size} viewBox="0 0 22 22" fill="none" stroke="#fff">
    <rect x="7.500" y="1" width="7" height="12" rx="3.500" fill="#fff" stroke="none" />
    <path d="M4.500 10.500Q5 16 11 16T17.500 10.500M11 16V21.500" strokeWidth="1.700" />
    <path d="M1.500 1.500 20.500 21.500" stroke="#3a3a3a" strokeWidth="3.500" />
    <path d="M1 1 21 21.500" strokeWidth="1.500" />
  </svg>
);

const CallControls = () => (
  <>
    <CallShadow />
    <CallBar>
      <RecInfo>
        <svg width="16" height="16" viewBox="0 0 16 16"><circle cx="8" cy="8" r="7" fill="#444" stroke="#fff" strokeWidth="1.500" /><circle cx="8" cy="8" r="5.200" fill="#c4003f" /></svg>
        <span>21:18</span>
      </RecInfo>
      <CallButton>
        <svg width="24" height="22" viewBox="0 0 24 22"><rect x="1" y="3" width="15" height="16" rx="2.500" fill="#fff" /><path d="M16 9 22 4.500Q23 4.500 23 5.500V17Q22 18 21 17L16 13Z" fill="#fff" /><path d="M1 0 23 21" stroke="#444" strokeWidth="4" /><path d="M1.500.5 22.500 21.500" stroke="#fff" strokeWidth="1.500" /></svg>
      </CallButton>
      <CallButton><MicOff /></CallButton>
      <CallButton>
        <svg width="22" height="18" viewBox="0 0 22 18" fill="none" stroke="#fff" strokeWidth="1.300"><rect x=".8" y="1.500" width="20.400" height="15" rx="2" /><path d="M11 14V4.500M7 8.500 11 4.500 15 8.500" strokeWidth="1.500" /></svg>
      </CallButton>
      <CallButton>
        <svg width="18" height="6" viewBox="0 0 18 6" fill="#fff"><circle cx="2.500" cy="3" r="2.300" /><circle cx="9" cy="3" r="2.300" /><circle cx="15.500" cy="3" r="2.300" /></svg>
      </CallButton>
      <CallButton $tone="dark">
        <svg width="20" height="24" viewBox="0 0 20 24" fill="none" stroke="#fff" strokeWidth="1.400" strokeLinejoin="round" strokeLinecap="round"><path d="M2.500 12V5.500Q2.500 4 4 4T5.500 5.500V3.500Q5.500 2 7 2T8.500 3V2.500Q8.500 1 10 1T11.500 2.500V4Q11.500 2.800 13 2.800T14.500 4.500V14Q16.500 11.500 18.500 12.500Q17.500 14 16 17Q14 22.500 9.500 22.500Q2.500 22.500 2.500 15ZM5.500 5V11M8.500 3V10.500M11.500 3.500V11" /></svg>
      </CallButton>
      <CallButton $tone="dark">
        <svg width="26" height="26" viewBox="0 0 26 26" fill="none" stroke="#fff" strokeWidth="1.400"><path d="M13 3.500A10 10 0 1 1 8.500 22.500L3 23.500 4.500 18.500A10 10 0 0 1 13 3.500ZM9.500 11.500H16M9.500 15.500H13.500" /><circle cx="21.500" cy="4.500" r="4.500" fill="#ee6d2c" stroke="none" /></svg>
      </CallButton>
      <CallButton $tone="dark">
        <svg width="22" height="22" viewBox="0 0 22 22" fill="none" stroke="#fff" strokeWidth="1.300"><circle cx="7.500" cy="5.500" r="4.300" /><circle cx="17" cy="7" r="2.800" /><path d="M1 14.500Q1 13 2.500 13H12.500Q14 13 14 14.500 14 20.500 7.500 20.500T1 14.500ZM15.500 13H19.500Q21.300 13 21.300 14.500 21 19 15 19" /></svg>
      </CallButton>
      <CallButton $tone="end">
        <svg width="22" height="10" viewBox="0 0 22 10"><path d="M.5 6Q1.500.5 11 .5T21.500 6Q22 9.500 19 9L16 8.300Q14.500 8 14.500 5.700 11 4.200 7.500 5.700 7.500 8 6 8.300L3 9Q0 9.500.5 6Z" fill="#fff" /></svg>
      </CallButton>
    </CallBar>
  </>
);

const Roster = styled.div`
  height: 94px;
  flex: none;
  display: flex;
  background: #1b1b1b;
`;

const Group = styled.div`
  width: 808px;
  flex: none;
  display: flex;
  align-items: center;
  padding-left: 73px;
`;

const Avatar = styled.span<{ $bg: string; $fg: string; $size?: number }>`
  width: ${(p) => p.$size || 42}px;
  height: ${(p) => p.$size || 42}px;
  flex: none;
  display: flex;
  align-items: center;
  justify-content: center;
  border-radius: 50%;
  background: ${(p) => p.$bg};
  color: ${(p) => p.$fg};
  font-family: "Open Sans", sans-serif;
  font-weight: 600;
  font-size: 16px;
  letter-spacing: -0.2px;
  -webkit-text-stroke: 0.25px currentColor;
`;

const Spaced = styled.div`
  display: flex;
  gap: 42px;
  margin-left: 40px;
`;

const Overflow = styled(Avatar)`
  margin-top: 2px;
  font-size: 14px;
  font-weight: 500;
  letter-spacing: 0.2px;
  -webkit-text-stroke: 0;
`;

const Tile = styled.div<{ $bg: string }>`
  position: relative;
  width: 180px;
  flex: none;
  display: flex;
  align-items: center;
  justify-content: center;
  background: ${(p) => p.$bg};
`;

const Muted = styled.span`
  position: absolute;
  left: 21px;
  top: 77px;
`;

const Ring = styled.span`
  display: flex;
  padding: 2px;
  border: 3px solid #a77bff;
  border-radius: 50%;
  background: #2f2740;
`;

const TileName = styled.span`
  position: absolute;
  left: 15px;
  top: 77px;
  color: #ececec;
  font-size: 12px;
  letter-spacing: -0.35px;
  line-height: 18px;
  text-shadow: 0 1px 2px #000;
`;

const people: [string, string, string][] = [
  ['R', '#e2d9ec', '#533a74'], ['SO', '#cdf1de', '#14704a'], ['KB', '#faf5c8', '#847408'], ['KJ', '#e7cbd1', '#6b1022'],
  ['BM', '#faf5c8', '#847408'], ['NK', '#fcddd6', '#94392b'], ['RK', '#d5e1ea', '#32506a'], ['A', '#cdf1de', '#14704a'],
];

const Meeting = () => (
  <>
    <Banner>
      <svg width="16" height="15" viewBox="0 0 16 15"><path d="M8 0Q8.800 0 9.200.8L15.800 13Q16.300 15 14.500 15H1.500Q-.3 15 .2 13L6.800.8Q7.200 0 8 0Z" fill="#fff" /><path d="M8 5V9.500M8 11V13" stroke="#382a63" strokeWidth="1.700" /></svg>
      <BannerText><b>Recording has started.</b> This meeting is being recorded. By joining, you are giving consent for this meeting to be recorded. <u>Privacy policy</u></BannerText>
      <Dismiss>Dismiss</Dismiss>
    </Banner>
    <Stage>
      <Presenter>Janet Maranga</Presenter>
      <Slide>
        <SlideHead>
          <svg width="144" height="83" viewBox="0 0 144 83">
            <path d="M0 0H116L132 41.500 116 83H0Z" fill="#3035cd" />
            <path d="M121 0H126L142.500 41.500 125 83H120L136.500 41.500Z" fill="#2f78e6" />
            <circle cx="70.700" cy="41.500" r="23" fill="none" stroke="#fff" strokeWidth="2.600" />
            <circle cx="61.500" cy="34.500" r="3.200" fill="#fff" />
            <path d="M55.500 53 63.500 42.500 67.500 47.500 77 36.500 86 53Z" fill="#fff" />
          </svg>
          <SlideTitle>CPU Virtualization</SlideTitle>
        </SlideHead>
        <Columns>
          <Column>
            <ColumnTitle>Full virtualization</ColumnTitle>
            <Rings
              left={250}
              guest={['Guest OS']}
              pointer
              notes={[
                { t: 'User', x: 751, y: 400, a: 38 }, { t: 'instruction', x: 741, y: 413.5, a: 38 },
                { t: 'Kernel', x: 724.5, y: 519.5, a: 51 }, { t: 'instruction ', x: 711, y: 531, a: 51 },
              ]}
            />
          </Column>
          <Column $right>
            <ColumnTitle $right>Paravirtualization</ColumnTitle>
            <Rings
              left={333}
              guest={['Paravirtualized', 'Guest OS']}
              notes={[
                { t: 'User', x: 757, y: 402, a: 44 }, { t: 'instruction', x: 745, y: 415.5, a: 43 },
                { t: 'Hypercall', x: 713, y: 523, a: 49 },
              ]}
            />
          </Column>
        </Columns>
        <SlideFoot>
          <Controls>
            <svg width="190" height="26" viewBox="0 0 190 26" fill="none" stroke="#d8d5da" strokeWidth="1.200">
              {[12, 45, 77, 110, 142, 175].map((x) => <circle key={x} cx={x} cy="12.500" r="12" />)}
              <path d="M15 8V17L9 12.500ZM42 8V17L48 12.500ZM72 18 82 7 83 9 74 18ZM103 8H112V17H103ZM108 11H118V19H108ZM146 16 150 20M170 12H172M175 12H177M180 12H182" />
              <circle cx="142" cy="12" r="4" />
            </svg>
          </Controls>
          <PageNo>Page 12</PageNo>
          <span>Copyright © Huawei Technologies Co., Ltd. 2019</span>
          <Brand><HuaweiFlower /><BrandName>HUAWEI</BrandName></Brand>
        </SlideFoot>
      </Slide>
      <CallControls />
    </Stage>
    <Roster>
      <Group>
        <Overflow $bg="#6b46a8" $fg="#fff" $size={44}>+64</Overflow>
        <Spaced>{people.map(([t, bg, fg]) => <Avatar key={t} $bg={bg} $fg={fg}>{t}</Avatar>)}</Spaced>
      </Group>
      <Tile $bg="#3b3b3b"><Avatar $bg="#d5e5c9" $fg="#4d7a35" $size={44}>S</Avatar><Muted><MicOff size={15} /></Muted></Tile>
      <Tile $bg="#383838"><Avatar $bg="#faf5c8" $fg="#847408" $size={44}>R</Avatar><Muted><MicOff size={15} /></Muted></Tile>
      <Tile $bg="#333"><Avatar $bg="#f5eecb" $fg="#8c7418" $size={44}>J</Avatar><Muted><MicOff size={15} /></Muted></Tile>
      <Tile $bg="radial-gradient(circle at 50% 45%, #5b437c 0, #54406f 25%, #44385a 48%, #3b3347 75%)">
        <Ring><Avatar $bg="#f5eecb" $fg="#7d6b10" $size={44}>JM</Avatar></Ring>
        <TileName>Janet Maranga</TileName>
      </Tile>
    </Roster>
  </>
);

const Caret = () => <svg width="10" height="5" viewBox="0 0 10 5"><path d="M0 0H10L5 5Z" fill="#f2f2f2" /></svg>;

export default function App() {
  return (
    <Screen>
      <Global />
      <SystemBar>
        <SystemLeft>
          <Activities>Activities</Activities>
          <ChromeLogo size={16} grey />
          <AppName>Google Chrome</AppName>
          <Caret />
        </SystemLeft>
        <Clock>Onk 28  17:35</Clock>
        <Tray>
          <TrayItem $w={20}>
            <svg width="17" height="16" viewBox="0 0 17 16"><circle cx="9" cy="3" r="2.800" fill="#5a62d2" /><circle cx="14" cy="3.500" r="2" fill="#4a50b8" /><path d="M5 6H16V11Q14 15 9 15Q5 14 5 11Z" fill="#4f58c8" /><rect x="0" y="3" width="9" height="9" rx="1" fill="#3e459e" /><TinyBold x="4.500" y="10.200" fontSize="7" fill="#fff">T</TinyBold></svg>
          </TrayItem>
          <TrayItem $w={60}>
            <svg width="16" height="16" viewBox="8 8 32 32"><SlackMark mono /><circle cx="29" cy="30" r="8" fill="#f0286c" /></svg>
          </TrayItem>
          <TrayItem $w={30}><svg width="16" height="12" viewBox="0 0 16 12"><path d="M0 2.500Q8-2.500 16 2.500L8 12Z" fill="#f2f2f2" /></svg></TrayItem>
          <TrayItem $w={26}><MdVolumeUp size={18} color="#f2f2f2" /></TrayItem>
          <TrayItem $w={27}><MdMic size={18} color="#f2f2f2" /></TrayItem>
          <TrayItem $w={31}><svg width="10" height="15" viewBox="0 0 10 15"><path d="M1 2H9V14H1ZM3.500.7H6.500" fill="none" stroke="#f2f2f2" strokeWidth="1.500" /><path d="M2.500 6.500H7.500V12.500H2.500Z" fill="#f2f2f2" /></svg></TrayItem>
          <TrayItem $w={16}><Caret /></TrayItem>
        </Tray>
      </SystemBar>
      <Desktop>
        <Dock />
        <Browser>
          <Chrome />
          <Meeting />
        </Browser>
      </Desktop>
    </Screen>
  );
}
